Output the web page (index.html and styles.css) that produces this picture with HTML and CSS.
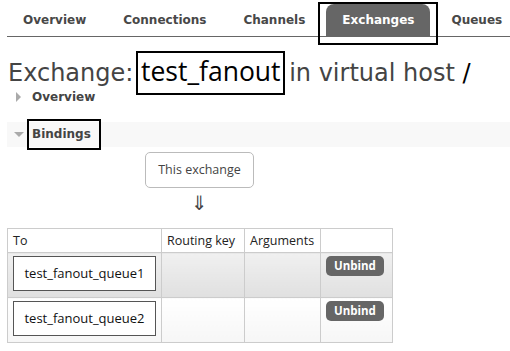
FILE: index.html
```html
<!DOCTYPE html>
<html>
<head>
<meta charset="utf-8">
<link rel="stylesheet" href="styles.css">
</head>
<body>
<nav class="tabs">
  <a class="tab">Overview</a>
  <a class="tab">Connections</a>
  <a class="tab">Channels</a>
  <a class="tab active">Exchanges</a>
  <a class="tab">Queues</a>
  <span class="mark mark-tab"></span>
</nav>
<main class="main">
  <h1 class="title">Exchange: <b class="name">test_fanout</b> in virtual host <b class="vhost">/</b></h1>
  <div class="section closed">
    <span class="tri tri-right"></span><span class="sec-title">Overview</span>
  </div>
  <div class="section open">
    <span class="tri tri-down"></span><span class="sec-title boxed">Bindings</span>
  </div>
  <div class="flow">
    <div class="this-ex">This exchange</div>
    <div class="arrow">⇓</div>
  </div>
  <table class="bindings">
    <thead>
      <tr><th class="c-to">To</th><th class="c-rk">Routing key</th><th class="c-arg">Arguments</th><th class="c-btn"></th></tr>
    </thead>
    <tbody>
      <tr class="alt1"><td><span class="queue">test_fanout_queue1</span></td><td></td><td></td><td><button class="unbind">Unbind</button></td></tr>
      <tr class="alt2"><td><span class="queue">test_fanout_queue2</span></td><td></td><td></td><td><button class="unbind">Unbind</button></td></tr>
    </tbody>
  </table>
</main>
</body>
</html>
```
FILE: styles.css
```css
html, body { margin: 0; padding: 0; background: #fff; }
body { width: 510px; height: 351px; overflow: hidden; font-family: "DejaVu Sans", Verdana, sans-serif; }

.tabs {
  position: relative;
  display: flex;
  margin: 4px 0 0 7px;
  border-bottom: 1px solid #666;
  height: 32px;
  white-space: nowrap;
}
.tab {
  display: block;
  padding: 0 16px;
  margin-right: 5px;
  line-height: 32px;
  font-size: 12px;
  font-weight: bold;
  color: #484848;
  border-radius: 8px 8px 0 0;
}
.tab.active { background: #666; color: #fff; }
.mark { position: absolute; border: 2px solid #000; }
.mark-tab { left: 311px; top: -2px; width: 116px; height: 39px; }

.main { padding: 0 0 0 8px; }
.title {
  margin: 19px 0 0 0;
  font-family: "DejaVu Sans", Verdana, sans-serif;
  font-weight: normal;
  font-size: 24px;
  line-height: 30px;
  color: #444;
  white-space: nowrap;
}
.title .name {
  font-family: "Open Sans", sans-serif;
  font-weight: normal;
  font-size: 26.5px;
  color: #000;
  border: 2px solid #000;
  padding: 0 2px 4px 3px;
  margin-left: -5px;
  margin-right: -3px;
}
.title .vhost { font-weight: normal; color: #000; }

.section {
  display: flex;
  align-items: center;
  font-size: 12px;
  font-weight: bold;
  color: #444;
}
.closed { height: 18px; margin-top: 0; padding-left: 8px; }
.open { height: 25px; margin-top: 16px; background: #f8f8f8; padding-left: 7px; margin-left: -1px; }
.tri { width: 0; height: 0; }
.tri-right { border-left: 5px solid #aaa; border-top: 5px solid transparent; border-bottom: 5px solid transparent; margin-right: 11px; }
.tri-down { border-top: 5px solid #aaa; border-left: 5px solid transparent; border-right: 5px solid transparent; margin-right: 3px; }
.sec-title.boxed { border: 2px solid #000; line-height: 15px; padding: 6px 8px 6px 3px; }

.flow { display: flex; flex-direction: column; align-items: center; width: 385px; margin: 5px 0 0 -1px; }
.this-ex {
  font-family: "Open Sans", sans-serif;
  font-size: 12.5px;
  color: #444;
  border: 1px solid #bbb;
  border-radius: 5px;
  padding: 0 12px;
  line-height: 34px;
}
.arrow { font-size: 20px; line-height: 24px; color: #444; margin-top: 3px; }

.bindings {
  margin: 13px 0 0 -1px;
  border-collapse: collapse;
  table-layout: fixed;
  font-family: "Open Sans", sans-serif;
  font-size: 12.5px;
  color: #222;
}
.bindings th, .bindings td { border: 1px solid #ccc; padding: 0; }
.bindings th { font-weight: normal; text-align: left; height: 23px; padding: 0 5px; white-space: nowrap; }
.c-to { width: 143px; }
.c-rk { width: 72px; }
.c-arg { width: 65px; }
.c-btn { width: 61px; }
.bindings td { height: 38px; vertical-align: top; padding: 3px 5px; }
.alt1 td { background: linear-gradient(#f0f0f0, #e0e0e0); }
.alt2 td { background: linear-gradient(#fff, #f6f6f6); }
.queue {
  display: block;
  border: 1px solid #555;
  background: #fff;
  color: #111;
  font-size: 13px;
  line-height: 33px;
  text-align: center;
  width: 141px;
}
.unbind {
  display: block;
  background: #666;
  color: #fff;
  border: none;
  border-radius: 5px;
  font-family: "Open Sans", sans-serif;
  font-weight: bold;
  font-size: 11.5px;
  padding: 0 8px;
  line-height: 20px;
  height: 20px;
}
```
